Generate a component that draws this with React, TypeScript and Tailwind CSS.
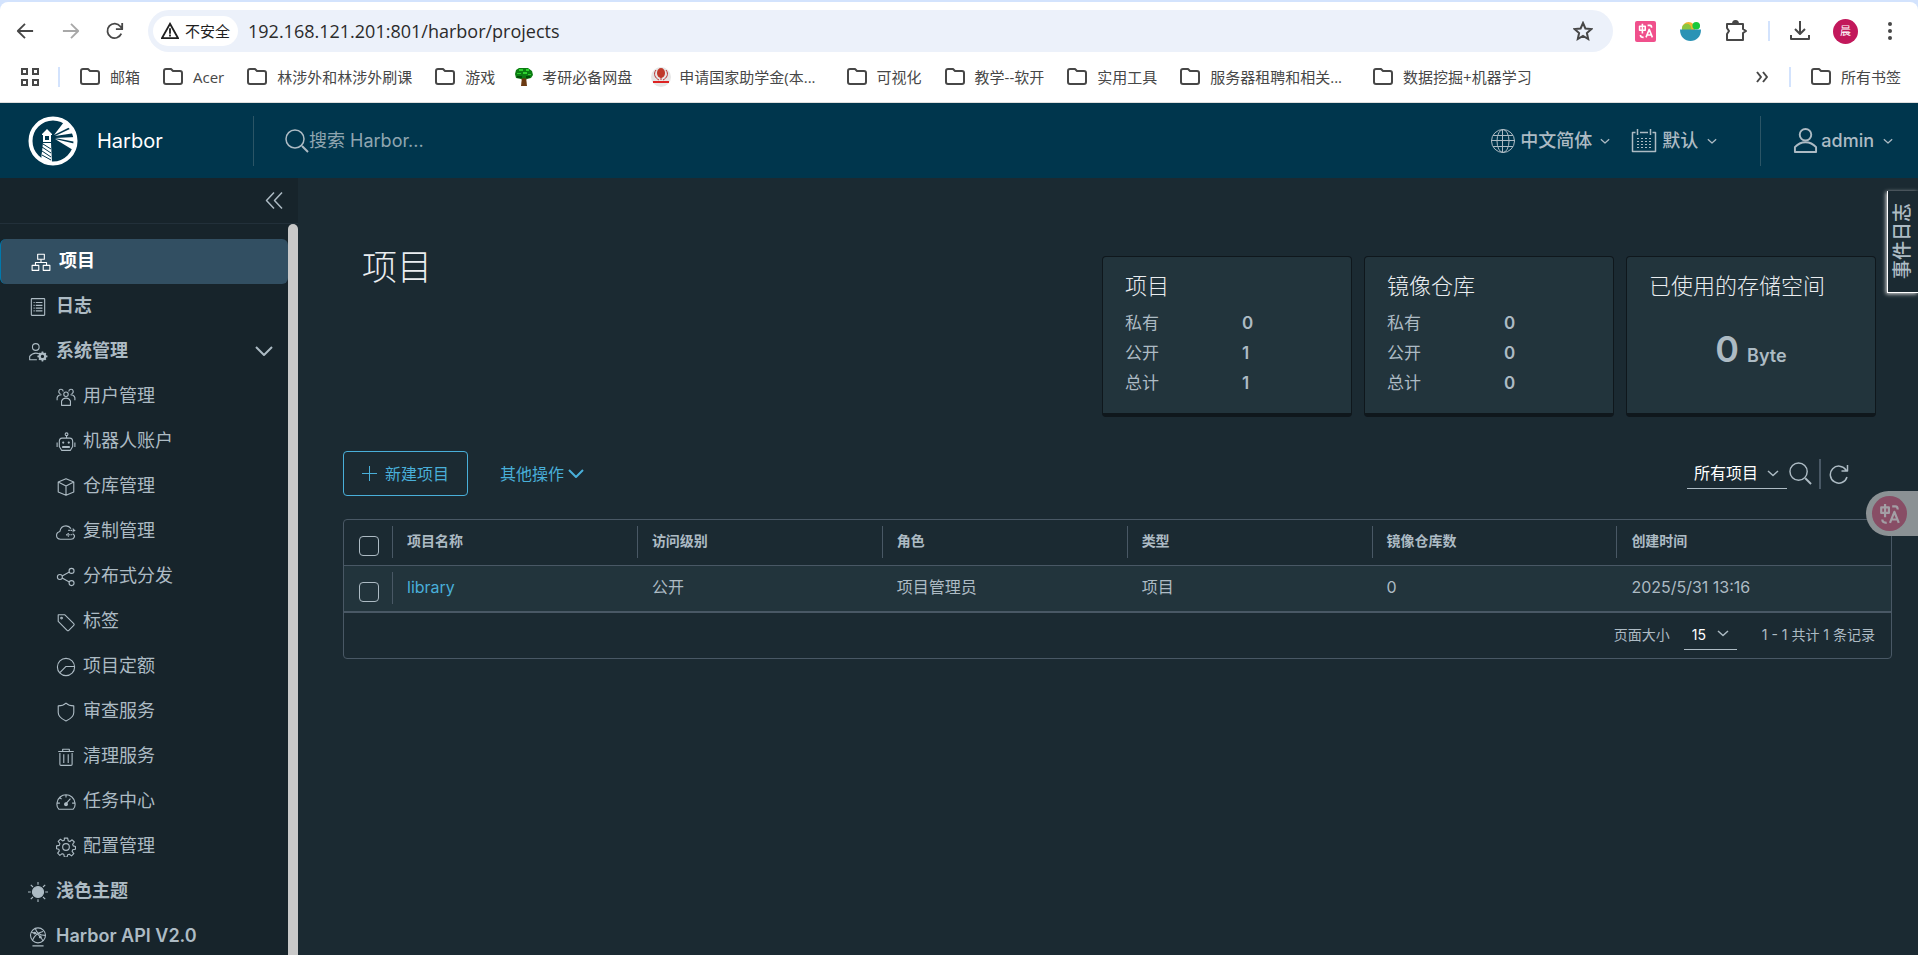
import type { ReactNode } from 'react';

const UI_FONT = "font-['Inter','Noto_Sans_CJK_SC',sans-serif]";
const CHROME_FONT = "font-['Open_Sans','Noto_Sans_CJK_SC',sans-serif]";

interface IconProps {
  children: ReactNode;
  className?: string;
  box?: number;
  stroke?: number;
}

function Icon({ children, className = 'size-5', box = 36, stroke = 2 }: IconProps) {
  return (
    <svg
      viewBox={`0 0 ${box} ${box}`}
      className={`shrink-0 ${className}`}
      fill="none"
      stroke="currentColor"
      strokeWidth={stroke}
      strokeLinejoin="round"
      aria-hidden="true"
    >
      {children}
    </svg>
  );
}

const icons = {
  projects: (
    <>
      <rect x="12" y="4" width="12" height="9" />
      <rect x="2" y="24" width="12" height="9" />
      <rect x="22" y="24" width="12" height="9" />
      <path d="M18 13v6M8 24v-5h20v5" />
    </>
  ),
  logs: (
    <>
      <rect x="6" y="3" width="24" height="30" rx="1" />
      <path d="M10 10h2M14 10h12M10 15h2M14 15h12M10 20h2M14 20h12M10 25h2M14 25h12" />
    </>
  ),
  admin: (
    <>
      <circle cx="14" cy="9" r="6" />
      <path d="M16 32H3v-6c3-4 7-6 11-6 2 0 4 .4 6 1.300" />
      <circle cx="26" cy="26" r="5" strokeWidth="4" />
      <path d="M26 17v4M26 31v4M17 26h4M31 26h4M20 20l2 2M30 30l2 2M32 20l-2 2M22 30l-2 2" strokeWidth="3" />
    </>
  ),
  users: (
    <>
      <circle cx="18" cy="13" r="4" />
      <path d="M10 33v-8c2-4 5-5 8-5s6 1 8 5v8z" />
      <path d="M13 8a4 4 0 1 0-5 4M23 8a4 4 0 1 1 5 4M2 24v-5c1-3 4-5 8-5M34 24v-5c-1-3-4-5-8-5" />
    </>
  ),
  robot: (
    <>
      <circle cx="19" cy="4" r="2.500" />
      <path d="M19 6v5M11 11h14c3 0 5 3 5 6v9l-4 7H10l-4-7v-9c0-3 2-6 5-6zM2 19v8M34 19v8M12 26h12v2H12z" />
      <circle cx="13" cy="19" r="1" />
      <circle cx="23" cy="19" r="1" />
    </>
  ),
  cube: <path d="M18 3l14 6v18l-14 6-14-6V9zM4 9l14 7 14-7M18 16v17" />,
  cloud: (
    <>
      <path d="M30 21c3 2 4 4 3 6-1 3-3 4-6 4H8c-4 0-7-3-7-7 0-3 2-6 6-7 1-6 5-10 11-10 4 0 7 2 9 5" />
      <path d="M22 15h11M30 12l4 3-4 3M29 23h-9M23 20l-4 3 4 3" strokeDasharray="3 1" />
    </>
  ),
  share: (
    <>
      <circle cx="7" cy="18" r="4.500" />
      <circle cx="28" cy="7" r="4.500" />
      <circle cx="28" cy="29" r="4.500" />
      <path d="M11 16l13-7M11 20l13 7" />
    </>
  ),
  tag: (
    <>
      <path d="M4 5h12l16 16c1 1 1 2 0 3l-9 9c-1 1-2 1-3 0L4 17z" />
      <circle cx="10" cy="11" r="1.500" />
    </>
  ),
  quota: (
    <>
      <circle cx="18" cy="18" r="15.500" />
      <path d="M33 17H18L7 28" />
    </>
  ),
  shield: <path d="M18 2c4 4 9 5 14 5v12c0 7-7 12-14 15C11 31 4 26 4 19V7c5 0 10-1 14-5z" />,
  trash: (
    <>
      <path d="M4 8h28M12 8V4h12v4M7 11v20c0 1 1 2 2 2h18c1 0 2-1 2-2V11M14 13v16M22 13v16" />
    </>
  ),
  gauge: (
    <>
      <path d="M5 31C2 28 1 24 2 19 3 11 10 5 18 5s15 6 16 14c1 5 0 9-3 12zM18 5v5M2 20h5M29 20h5M7 10l3 3M18 21l8-9" />
      <circle cx="18" cy="22" r="2.500" fill="currentColor" />
    </>
  ),
  gear: (
    <>
      <path d="M15 2h6l1 5 3 1 4-3 4 4-3 4 1 3 4 1v5l-5 1-1 3 3 4-4 4-4-3-3 1-1 4h-5l-1-5-3-1-4 3-4-4 3-4-1-3-4-1v-5l5-1 1-3-3-4 4-4 4 3 3-1z" />
      <circle cx="18" cy="18" r="6" />
    </>
  ),
  sun: (
    <>
      <circle cx="18" cy="18" r="10" fill="currentColor" />
      <path d="M18 0v5M18 31v5M0 18h5M31 18h5M5 5l4 4M27 27l4 4M31 5l-4 4M9 27l-4 4" />
    </>
  ),
  api: (
    <>
      <circle cx="18" cy="15" r="13.500" />
      <path d="M6 10c8 0 16 5 21 15M13 2c2 8 9 13 18 13M8 24c3-8 10-14 19-16M8 34h20" />
      <circle cx="12" cy="11" r="1.500" fill="currentColor" />
      <circle cx="22" cy="18" r="1.500" fill="currentColor" />
    </>
  ),
};

function Chevron({ className = 'size-3' }: { className?: string }) {
  return (
    <Icon box={24} stroke={3} className={className}>
      <path d="M2 8l10 9 10-9" />
    </Icon>
  );
}

function SearchIcon({ className }: { className?: string }) {
  return (
    <Icon box={48} stroke={3} className={className}>
      <circle cx="20" cy="20" r="18" />
      <path d="M34 34l12 12" strokeWidth="4" />
    </Icon>
  );
}

/* Browser toolbar */

function FolderIcon() {
  return (
    <Icon box={20} stroke={2} className="size-5 text-[#474747]">
      <path d="M1 4c0-1 .500-2 2-2h5l2 2h7c1 0 2 .500 2 2v9c0 1-.500 2-2 2H3c-1 0-2-.500-2-2z" />
    </Icon>
  );
}

function TreeIcon() {
  return (
    <svg viewBox="0 0 20 20" className="size-5 shrink-0" aria-hidden="true">
      <path d="M8 10h4l1 9H7z" fill="#6b3a12" />
      <path d="M10 13l4-3M10 13l-4-3" stroke="#6b3a12" strokeWidth="2" />
      <path d="M5 1h9l4 3 1 4-2 3-4 1-3-1-3 1-5-1-1-4 1-4z" fill="#0b7d12" />
      <path d="M5 2h4v2H5zM12 2h3v2h-3zM3 6h4v1H3zM9 5h4v2H9zM14 7h3v1h-3z" fill="#2fd02f" />
      <path d="M3 9h5v2H3zM12 9h4v2h-4z" fill="#034d07" />
    </svg>
  );
}

function GrantIcon() {
  return (
    <svg viewBox="0 0 20 20" className="size-5 shrink-0" aria-hidden="true">
      <circle cx="10" cy="10" r="10" fill="#e6e6e6" />
      <ellipse cx="10" cy="6" rx="4" ry="5" fill="#c0392b" />
      <path d="M5 3c-3 4-1 8 3 10M15 3c3 4 1 8-3 10M10 9v4" stroke="#bb3333" fill="none" />
      <path d="M2 15h16" stroke="#dd2222" strokeWidth="2" />
    </svg>
  );
}

const bookmarks = [
  { label: '邮箱' },
  { label: 'Acer' },
  { label: '林涉外和林涉外刷课' },
  { label: '游戏' },
  { label: '考研必备网盘', icon: <TreeIcon /> },
  { label: '申请国家助学金(本...', icon: <GrantIcon />, wide: true },
  { label: '可视化' },
  { label: '教学--软开' },
  { label: '实用工具' },
  { label: '服务器租聘和相关...', wide: true },
  { label: '数据挖掘+机器学习' },
];

function TranslateGlyph({ className }: { className: string }) {
  return (
    <Icon box={20} stroke={2} className={className}>
      <path d="M2 4h7v5H2zM5.500 1v12M12 3h3c1 0 2 1 2 3M3 15c0 2 1 3 4 3M10 18l4-10 4 10M11.500 15h5" />
    </Icon>
  );
}

function BrowserBar() {
  return (
    <div className={`h-[103px] shrink-0 bg-[#d3e3fd] pt-0.5 text-[#474747] ${CHROME_FONT}`}>
      <div className="h-full rounded-t-lg border-b border-[#dedede] bg-white">
        <div className="flex h-[58px] items-center">
          <button aria-label="Back" className="ml-4">
            <Icon box={20} stroke={2} className="size-[18px]">
              <path d="M19 10H2M10 2l-8 8 8 8" />
            </Icon>
          </button>
          <button aria-label="Forward" className="ml-7 text-[#a8a8a8]">
            <Icon box={20} stroke={2} className="size-[18px]">
              <path d="M1 10h17M10 2l8 8-8 8" />
            </Icon>
          </button>
          <button aria-label="Reload" className="ml-[26px]">
            <Icon box={20} stroke={2} className="size-[18px]">
              <path d="M17 13a8 8 0 1 1-1-8l2 2M18 1v7h-7" />
            </Icon>
          </button>
          <div className="ml-6 flex h-[42px] flex-1 items-center rounded-full bg-[#ecf1fa] pr-5 pl-[5px]">
            <button className="flex h-[30px] items-center gap-1.5 rounded-full bg-white px-2 text-[15px] text-[#1f1f1f]">
              <Icon box={20} stroke={2} className="size-[18px]">
                <path d="M10 2l9 16H1zM10 7v6M10 14v2" strokeLinejoin="miter" />
              </Icon>
              不安全
            </button>
            <input
              aria-label="Address"
              readOnly
              value="192.168.121.201:801/harbor/projects"
              className="ml-2.5 min-w-0 flex-1 bg-transparent text-[18px] text-[#2b2b2b] outline-none"
            />
            <button aria-label="Bookmark">
              <Icon box={20} stroke={2} className="size-5">
                <path d="M10 2l2.400 5.500 6 .500-4.500 4 1.300 6L10 15l-5.200 3 1.300-6-4.500-4 6-.500z" strokeLinejoin="miter" />
              </Icon>
            </button>
          </div>
          <button aria-label="Translate" className="ml-[22px] flex size-[21px] items-center justify-center rounded-xs bg-[#f0508c] text-white">
            <TranslateGlyph className="size-4" />
          </button>
          <button aria-label="Bowl" className="ml-6">
            <svg viewBox="0 0 22 22" className="size-[21px]" aria-hidden="true">
              <circle cx="9" cy="8" r="7" fill="#f2b632" />
              <circle cx="7" cy="8" r="5" fill="#8cc63e" />
              <circle cx="17" cy="5" r="4" fill="#18c83c" />
              <path d="M0 9h22c0 8-5 12-11 12S0 17 0 9z" fill="#2a93b5" />
            </svg>
          </button>
          <button aria-label="Extensions" className="ml-6">
            <Icon box={22} stroke={2} className="size-[22px]">
              <path d="M2 4h16v5l3 2-3 2v7H2v-6l2-3-2-3z" />
              <path d="M8 4c0-4 5-4 5 0z" fill="currentColor" />
            </Icon>
          </button>
          <span className="ml-[21px] h-5 w-0.5 bg-[#d3e3fd]" />
          <button aria-label="Downloads" className="ml-5">
            <Icon box={20} stroke={2} className="size-5">
              <path d="M10 0v13M5 8l5 5 5-5M1 14v4h18v-4" />
            </Icon>
          </button>
          <button className="ml-[23px] size-[25px] rounded-full bg-[#c2185b] text-[11px] text-white">晨</button>
          <button aria-label="Menu" className="mr-5 ml-6">
            <svg viewBox="0 0 16 20" className="h-5 w-4" fill="currentColor" aria-hidden="true">
              <circle cx="8" cy="3" r="2" />
              <circle cx="8" cy="10" r="2" />
              <circle cx="8" cy="17" r="2" />
            </svg>
          </button>
        </div>
        <div className="flex h-[34px] items-center pr-[17px] pl-[21px] text-[15px] whitespace-nowrap">
          <button aria-label="Apps">
            <Icon box={18} stroke={2} className="size-[18px]">
              <path d="M1 1h5v5H1zM12 1h5v5h-5zM1 12h5v5H1zM12 12h5v5h-5z" strokeLinejoin="miter" />
            </Icon>
          </button>
          <span className="mr-5 ml-[19px] h-5 w-0.5 bg-[#d3e3fd]" />
          <div className="flex flex-1 items-center gap-[23px]">
            {bookmarks.map((b) => (
              <a
                key={b.label}
                href="#"
                className={`flex items-center ${b.icon ? '-ml-1 gap-2' : 'gap-2.5'} ${b.wide ? 'mr-2' : ''}`}
              >
                {b.icon ?? <FolderIcon />}
                {b.label}
              </a>
            ))}
          </div>
          <button aria-label="More bookmarks">
            <Icon box={14} stroke={2} className="size-3.5">
              <path d="M2 2l4 5-4 5M8 2l4 5-4 5" />
            </Icon>
          </button>
          <span className="mx-5 h-5 w-0.5 bg-[#d3e3fd]" />
          <a href="#" className="flex items-center gap-2.5">
            <FolderIcon />
            所有书签
          </a>
        </div>
      </div>
    </div>
  );
}

/* Harbor header */

function HarborLogo() {
  return (
    <svg viewBox="0 0 50 50" className="size-[50px] shrink-0" aria-hidden="true">
      <circle cx="25" cy="25" r="22.500" fill="none" stroke="#fff" strokeWidth="4" />
      <path d="M26 19l10-13 6 5zM27 20l17-8 3 5zM27 22l21-1v5zM27 23l21 5-3 6z" fill="#fff" />
      <path d="M14 18l5-5 5 5v1h-1v7h-8v-7h-1z" fill="#fff" />
      <path d="M17 20h4v4h-4z" fill="#00364d" />
      <path d="M15 27h8l1 20-11-3z" fill="#fff" />
      <path d="M14 31l9 6M14 35l9 6M15 28l8 5M14 39l9 5" stroke="#00364d" strokeWidth="1" />
    </svg>
  );
}

function Header() {
  return (
    <header className="flex h-[75px] shrink-0 items-center bg-[#00364d] text-[18px] text-[#adbbc4]">
      <a href="#" className="flex w-[253px] items-center gap-[19px] pl-7 text-[20px] text-white">
        <HarborLogo />
        Harbor
      </a>
      <label className="flex h-[50px] flex-1 items-center border-l border-[#2b5566] pl-[31px]">
        <SearchIcon className="size-6" />
        <input
          aria-label="搜索"
          placeholder="搜索 Harbor..."
          className="w-64 bg-transparent outline-none placeholder:text-[#8fa5b0]"
        />
      </label>
      <button className="flex items-center gap-1 font-medium">
        <Icon box={26} stroke={1} className="size-[26px]">
          <circle cx="13" cy="13" r="11.500" />
          <ellipse cx="13" cy="13" rx="6" ry="11.500" />
          <path d="M12.500 1v24M1 12.500h24M3 7.500h20M3 18.500h20" />
        </Icon>
        中文简体
        <Chevron className="ml-1 size-2.5" />
      </button>
      <button className="ml-[21px] flex items-center gap-[5px] font-medium">
        <Icon box={26} stroke={1} className="size-[26px]">
          <path d="M4.500 4.500h-3v19h23v-19h-3M9 4.500h8M6.500 1v6M19.500 1v6" strokeWidth="1.500" />
          <path d="M6 10.500h14M6 13.500h14M6 16.500h14M6 19.500h14" strokeDasharray="2 2" />
        </Icon>
        默认
        <Chevron className="ml-1 size-2.5" />
      </button>
      <div className="ml-[43px] flex h-[50px] items-center border-l border-[#2b5566] pr-[25px] pl-8">
        <button className="flex items-center gap-[3px] font-medium">
          <Icon box={26} stroke={2} className="size-[25px]">
            <circle cx="13" cy="7" r="6" />
            <path d="M2 25v-5c6-7 16-7 22 0v5z" />
          </Icon>
          admin
          <Chevron className="ml-1.5 size-2.5" />
        </button>
      </div>
    </header>
  );
}

/* Side navigation */

const adminItems = [
  { label: '用户管理', icon: icons.users },
  { label: '机器人账户', icon: icons.robot },
  { label: '仓库管理', icon: icons.cube },
  { label: '复制管理', icon: icons.cloud },
  { label: '分布式分发', icon: icons.share },
  { label: '标签', icon: icons.tag },
  { label: '项目定额', icon: icons.quota },
  { label: '审查服务', icon: icons.shield },
  { label: '清理服务', icon: icons.trash },
  { label: '任务中心', icon: icons.gauge },
  { label: '配置管理', icon: icons.gear },
];

function NavLink({ label, icon }: { label: string; icon: ReactNode }) {
  return (
    <a href="#" className="flex h-[45px] shrink-0 items-center gap-2 pb-0.5 pl-7 font-semibold">
      <Icon className="mt-[3px] size-5">{icon}</Icon>
      {label}
    </a>
  );
}

function SideNav() {
  return (
    <nav className="flex w-[298px] shrink-0 flex-col bg-[#17242b] text-[18px] text-[#adbbc4]">
      <div className="flex h-[46px] shrink-0 items-center justify-end border-b border-[#22303a] pr-3.5">
        <button aria-label="Collapse">
          <Icon box={40} stroke={3} className="size-5">
            <path d="M20 3L5 19l15 16M36 3L21 19l15 16" />
          </Icon>
        </button>
      </div>
      <div className="flex min-h-0 flex-1">
        <div className="flex flex-1 flex-col overflow-hidden pt-[15px]">
          <a
            href="#"
            className="flex h-[45px] shrink-0 items-center gap-2 rounded-md border-l border-[#0079ad] bg-[#324f62] pb-0.5 pl-[30px] font-semibold text-white"
          >
            <Icon className="mt-[3px] size-5">{icons.projects}</Icon>
            项目
          </a>
          <NavLink label="日志" icon={icons.logs} />
          <button className="flex h-[45px] shrink-0 items-center gap-2 pr-[15px] pb-0.5 pl-7 text-left font-semibold">
            <Icon className="mt-[3px] size-5">{icons.admin}</Icon>
            <span className="flex-1">系统管理</span>
            <Icon box={18} stroke={2} className="size-[18px]">
              <path d="M1 5l8 8 8-8" />
            </Icon>
          </button>
          {adminItems.map((item) => (
            <a key={item.label} href="#" className="flex h-[45px] shrink-0 items-center gap-[7px] pb-0.5 pl-14">
              <Icon className="mt-[3px] size-5">{item.icon}</Icon>
              {item.label}
            </a>
          ))}
          <NavLink label="浅色主题" icon={icons.sun} />
          <NavLink label="Harbor API V2.0" icon={icons.api} />
        </div>
        <div className="w-2.5 rounded-t-full bg-[#c8c8c8]" />
      </div>
    </nav>
  );
}

/* Projects page */

function Card({ title, children }: { title: string; children: ReactNode }) {
  return (
    <section className="h-[161px] w-[250px] rounded-sm border border-b-4 border-[#0f171c] bg-[#22343c] px-[22px] pt-[11px]">
      <h2 className="text-[22px] leading-9 font-extralight text-[#eaedf0]">{title}</h2>
      {children}
    </section>
  );
}

function CountCard({ title, counts }: { title: string; counts: number[] }) {
  return (
    <Card title={title}>
      <dl className="grid grid-cols-[117px_1fr] pt-1 text-[17px] leading-[30px]">
        {['私有', '公开', '总计'].map((label, i) => (
          <div key={label} className="contents">
            <dt>{label}</dt>
            <dd className="font-semibold">{counts[i]}</dd>
          </div>
        ))}
      </dl>
    </Card>
  );
}

const columns = ['项目名称', '访问级别', '角色', '类型', '镜像仓库数', '创建时间'];

function Checkbox({ label }: { label: string }) {
  return (
    <input
      type="checkbox"
      aria-label={label}
      className="mt-2 block size-5 appearance-none rounded-sm border border-[#adbbc4]"
    />
  );
}

function ProjectTable() {
  return (
    <div className="mt-[23px] rounded-sm border border-[#495865]">
      <table className="w-full table-fixed text-left">
        <thead>
          <tr className="h-[45px] border-b border-[#495865] text-[14px]">
            <th className="w-12 pl-[15px]">
              <Checkbox label="全选" />
            </th>
            {columns.map((name) => (
              <th key={name} className="w-[15.83%] p-0 font-bold last:w-auto">
                <div className="h-8 border-l border-[#495865] pl-3.5 leading-[30px]">{name}</div>
              </th>
            ))}
          </tr>
        </thead>
        <tbody>
          <tr className="h-[47px] border-b-2 border-[#495865] bg-[#22343c] text-[16px]">
            <td className="pl-[15px]">
              <Checkbox label="library" />
            </td>
            <td className="p-0">
              <div className="h-8 border-l border-[#495865] pl-3.5 leading-[30px]">
                <a href="#" className="text-[#49afd9]">
                  library
                </a>
              </div>
            </td>
            <td className="pb-0.5 pl-[15px]">公开</td>
            <td className="pb-0.5 pl-[15px]">项目管理员</td>
            <td className="pb-0.5 pl-[15px]">项目</td>
            <td className="pb-0.5 pl-[15px]">0</td>
            <td className="pb-0.5 pl-[15px]">2025/5/31 13:16</td>
          </tr>
        </tbody>
      </table>
      <div className="flex h-[45px] items-center justify-end pr-4 pb-0.5 text-[14px]">
        <label htmlFor="page-size">页面大小</label>
        <div className="relative ml-3.5">
          <select
            id="page-size"
            className="h-[31px] w-[53px] appearance-none border-b border-[#adbbc4] bg-transparent pl-2 text-white"
          >
            <option>15</option>
          </select>
          <Chevron className="pointer-events-none absolute top-2 right-2 size-3" />
        </div>
        <span className="ml-[25px]">1 - 1 共计 1 条记录</span>
      </div>
    </div>
  );
}

function Projects() {
  return (
    <main className="min-w-0 flex-1 pr-[26px] pl-[45px]">
      <div className="flex justify-between pr-4 pl-[19px]">
        <h1 className="pt-[62px] text-[35px] leading-[54px] font-extralight text-[#eaedf0]">项目</h1>
        <div className="flex gap-3 pt-[78px]">
          <CountCard title="项目" counts={[0, 1, 1]} />
          <CountCard title="镜像仓库" counts={[0, 0, 0]} />
          <Card title="已使用的存储空间">
            <p className="mt-[18px] flex items-baseline justify-center gap-2 font-semibold">
              <span className="text-[36px] leading-[54px]">0</span>
              <span className="text-[18px]">Byte</span>
            </p>
          </Card>
        </div>
      </div>

      <div className="mt-[34px] flex items-center">
        <button className="flex h-[45px] w-[125px] items-center justify-center gap-2 rounded-sm border border-[#49afd9] text-[16px] text-[#49afd9]">
          <Icon box={15} stroke={1} className="size-[15px]">
            <path d="M7.500 0v15M0 7.500h15" />
          </Icon>
          新建项目
        </button>
        <button className="ml-8 flex items-center gap-1 text-[16px] text-[#49afd9]">
          其他操作
          <Icon box={16} stroke={2} className="size-4">
            <path d="M1 4l7 7 7-7" />
          </Icon>
        </button>
        <div className="ml-auto flex items-center pr-[43px]">
          <div className="relative">
            <select
              aria-label="筛选项目"
              className="h-[30px] w-[100px] appearance-none border-b border-[#adbbc4] bg-transparent pl-[7px] text-[16px] text-white"
            >
              <option>所有项目</option>
            </select>
            <Chevron className="pointer-events-none absolute top-2 right-2 size-3" />
          </div>
          <button aria-label="搜索" className="ml-0.5">
            <SearchIcon className="size-[23px]" />
          </button>
          <span className="ml-[7px] h-[30px] w-0.5 bg-[#495865]" />
          <button aria-label="刷新" className="ml-2">
            <Icon box={40} stroke={3} className="size-5">
              <path d="M36 26a17 17 0 1 1-2-14l2 2M37 2v12H25" />
            </Icon>
          </button>
        </div>
      </div>

      <ProjectTable />
    </main>
  );
}

export default function App() {
  return (
    <div className="relative flex h-screen flex-col overflow-hidden bg-[#1b2a32]">
      <BrowserBar />
      <div className={`flex min-h-0 flex-1 flex-col text-[#adbbc4] ${UI_FONT}`}>
        <Header />
        <div className="flex min-h-0 flex-1">
          <SideNav />
          <Projects />
        </div>

        {/* Event log drawer handle */}
        <button className="absolute top-[191px] right-0 flex h-[102px] w-[31px] items-center justify-center border-b border-l border-white bg-[#1b2a32] text-[19px] font-medium shadow-[-1px_1px_4px_#dddddd]">
          <span className="rotate-180 [text-orientation:sideways] [writing-mode:vertical-rl]">事件日志</span>
        </button>

        {/* Floating translate button */}
        <button
          aria-label="Translate page"
          className="absolute top-[491px] right-0 flex h-[45px] w-[52px] items-center rounded-l-full bg-[#8b9194] pl-1.5"
        >
          <span className="flex size-[35px] items-center justify-center rounded-full bg-[#884d65] text-[#a39fa5]">
            <TranslateGlyph className="size-[22px]" />
          </span>
        </button>
      </div>
    </div>
  );
}
